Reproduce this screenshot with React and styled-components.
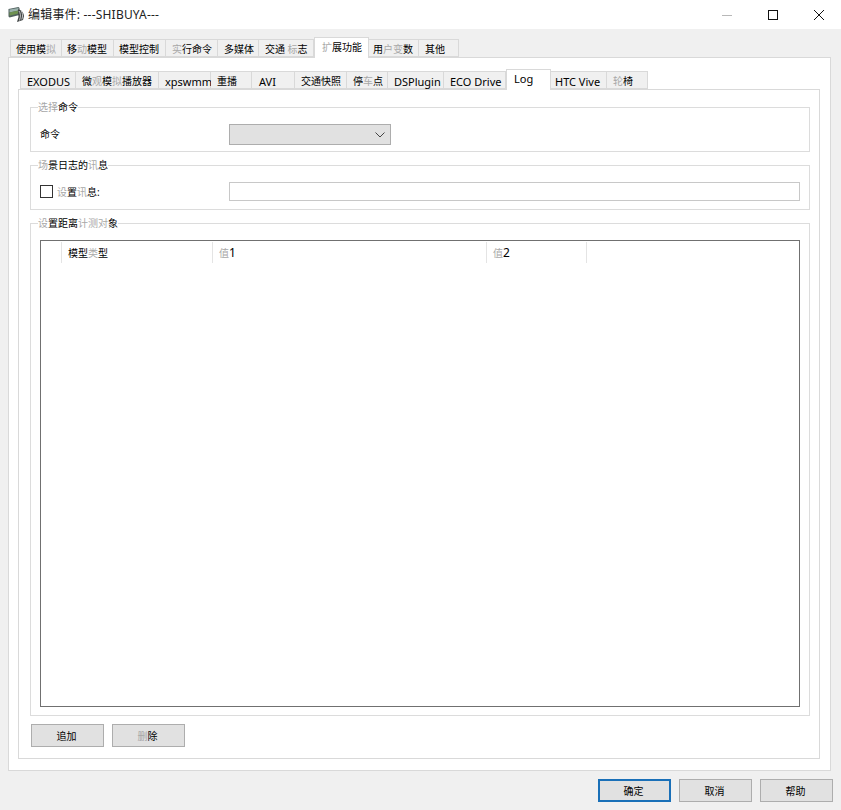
import React from "react";
import styled, { createGlobalStyle } from "styled-components";

const Global = createGlobalStyle`
  html, body {
    margin: 0;
    padding: 0;
    background: #f0f0f0;
  }
  * {
    box-sizing: border-box;
  }
`;

const Window = styled.div`
  width: 841px;
  height: 810px;
  overflow: hidden;
  display: flex;
  flex-direction: column;
  background: #f0f0f0;
  color: #000;
  font-family: "Noto Sans", "Noto Sans CJK SC", sans-serif;
  font-size: 10px;
`;

const TitleBar = styled.div`
  height: 29px;
  flex: none;
  display: flex;
  align-items: center;
  background: #fff;
  padding: 0 0 0 8px;
`;

const TitleText = styled.div`
  margin-left: 3px;
  font-size: 12px;
  letter-spacing: 0.2px;
  color: #222;
  flex: 1;
  line-height: 29px;
`;

const WinButton = styled.div`
  width: 46px;
  height: 29px;
  padding-left: 2px;
  display: flex;
  align-items: center;
  justify-content: center;
`;

const Main = styled.div`
  flex: 1;
  display: flex;
  flex-direction: column;
  padding: 10px 10px 8px 8px;
`;

const TabRow = styled.div`
  display: flex;
  align-items: flex-end;
  height: ${(p) => p.$h}px;
  padding-left: ${(p) => p.$left}px;
  position: relative;
  z-index: 1;
  flex: none;
`;

const Tab = styled.div`
  width: ${(p) => p.$w}px;
  height: ${(p) => (p.$active ? 21 : 18)}px;
  margin-bottom: ${(p) => (p.$active ? -1 : 0)}px;
  padding-left: ${(p) => p.$pad}px;
  background: ${(p) => (p.$active ? "#fff" : "#f0f0f0")};
  border: 1px solid #d9d9d9;
  border-left-width: ${(p) => (p.$first || p.$active ? 1 : 0)}px;
  border-bottom-width: ${(p) => (p.$active ? 0 : 1)}px;
  line-height: ${(p) => (p.$active ? 18 : 19)}px;
  font-size: ${(p) => (p.$latin ? 11 : 10)}px;
  white-space: nowrap;
  flex: none;
`;

const Faint = styled.span`
  color: #a8a8a8;
`;

const OuterPage = styled.div`
  flex: 1;
  display: flex;
  flex-direction: column;
  background: #fff;
  border: 1px solid #d9d9d9;
  padding: 13px 10px 11px 9px;
`;

const InnerPage = styled.div`
  flex: 1;
  display: flex;
  flex-direction: column;
  gap: 6px;
  border: 1px solid #d9d9d9;
  padding: 10px 9px 11px 11px;
  background: #fff;
`;

const Group = styled.fieldset`
  margin: 0;
  min-width: 0;
  border: 1px solid #dcdcdc;
  padding: 0;
  height: ${(p) => (p.$grow ? "auto" : "52px")};
  flex: ${(p) => (p.$grow ? "1" : "none")};
  display: flex;
  flex-direction: column;
`;

const Legend = styled.legend`
  margin-left: 7px;
  padding: 0;
  font-size: 10px;
  line-height: 14px;
  height: 14px;
`;

const CommandRow = styled.div`
  display: flex;
  align-items: center;
  height: 21px;
  margin: 10px 0 0 9px;
`;

const FieldLabel = styled.div`
  width: 189px;
  flex: none;
  line-height: 21px;
`;

const Select = styled.div`
  width: 162px;
  height: 21px;
  background: #e1e1e1;
  border: 1px solid #adadad;
  display: flex;
  align-items: center;
  justify-content: flex-end;
  padding-right: 4px;
`;

const MessageRow = styled.div`
  display: flex;
  align-items: center;
  height: 19px;
  margin: 10px 9px 0 9px;
`;

const Check = styled.div`
  width: 13px;
  height: 13px;
  border: 1px solid #333;
  background: #fff;
  flex: none;
  margin: 0 4px 0 0;
`;

const CheckLabel = styled.div`
  width: 172px;
  flex: none;
`;

const TextInput = styled.div`
  flex: 1;
  height: 19px;
  background: #fff;
  border: 1px solid #c8c8c8;
`;

const Table = styled.div`
  flex: 1;
  margin: 10px 9px 8px 9px;
  border: 1px solid #707070;
  padding-top: 1px;
`;

const TableHead = styled.div`
  display: flex;
  height: 21px;
`;

const HeadCell = styled.div`
  width: ${(p) => p.$w}px;
  flex: none;
  padding-left: 6px;
  border-right: 1px solid #e4e4e4;
  line-height: 22px;
  white-space: nowrap;
`;

const Num = styled.span`
  font-size: 12px;
`;

const ButtonRow = styled.div`
  display: flex;
  gap: 8px;
  flex: none;
  margin-top: 2px;
  margin-left: 1px;
`;

const Button = styled.button`
  width: 73px;
  height: 23px;
  padding: 0 2px 0 0;
  margin: 0;
  background: #e1e1e1;
  border: ${(p) => (p.$primary ? "2px solid #1a70b8" : "1px solid #adadad")};
  font-family: inherit;
  font-size: 10px;
  color: #000;
`;

const FooterRow = styled.div`
  display: flex;
  gap: 8px;
  flex: none;
  justify-content: flex-end;
  margin: 8px -2px 0 0;
`;

// picture card with a road curving across its lower right corner
const RoadIcon = () => (
  <svg width="17" height="17" viewBox="0 0 17 17">
    <path d="M0.5 3 L10.5 1 L11.5 2 L11.5 9 L1.5 11.5 L0.5 10.5 Z" fill="#50605e" />
    <path d="M1.5 3.6 L10.5 1.9 L10.5 4.4 L1.5 6.4 Z" fill="#9bb2ad" />
    <path d="M1.5 6.4 L10.5 4.4 L10.5 7.6 L1.5 9.8 Z" fill="#6e9150" />
    <path d="M10 3.5 C13 3.5 15.5 6 16 10 L15 14 L9 16 L10.5 11 Z" fill="#3f4343" />
    <path d="M11 5 C12.5 7 13 10 11.5 14.5 M13 4.8 C14.8 7 15 10 13.8 13.5" stroke="#d6d6d6" strokeWidth="0.9" fill="none" />
  </svg>
);

const outerTabs = [
  { w: 52, pad: 5, first: true, text: <>使用模<Faint>拟</Faint></> },
  { w: 52, pad: 5, text: <>移<Faint>动</Faint>模型</> },
  { w: 52, pad: 5, text: "模型控制" },
  { w: 52, pad: 6, text: <><Faint>实</Faint>行命令</> },
  { w: 41, pad: 6, text: "多媒体" },
  { w: 55, pad: 6, text: <>交通 <Faint>标</Faint>志</> },
  { w: 55, pad: 7, active: true, text: <><Faint>扩</Faint>展功能</> },
  { w: 50, pad: 4, text: <>用<Faint>户</Faint><Faint>变</Faint>数</> },
  { w: 40, pad: 6, text: "其他" },
];

const innerTabs = [
  { w: 56, pad: 6, first: true, latin: true, text: "EXODUS" },
  { w: 83, pad: 6, text: <>微<Faint>观</Faint>模<Faint>拟</Faint>播放器</> },
  { w: 52, pad: 6, latin: true, text: "xpswmm" },
  { w: 41, pad: 6, text: "重播" },
  { w: 43, pad: 7, latin: true, text: "AVI" },
  { w: 52, pad: 6, text: "交通快照" },
  { w: 41, pad: 6, text: <>停<Faint>车</Faint>点</> },
  { w: 56, pad: 6, latin: true, text: "DSPlugin" },
  { w: 62, pad: 6, latin: true, text: "ECO Drive" },
  { w: 45, pad: 7, active: true, latin: true, text: "Log" },
  { w: 56, pad: 4, latin: true, text: "HTC Vive" },
  { w: 41, pad: 6, text: <><Faint>轮</Faint>椅</> },
];

const columns = [
  { w: 21, text: "" },
  { w: 151, text: <>模型<Faint>类</Faint>型</> },
  { w: 274, text: <><Faint>值</Faint><Num>1</Num></> },
  { w: 100, text: <><Faint>值</Faint><Num>2</Num></> },
];

const renderTabs = (tabs) =>
  tabs.map((t, i) => (
    <Tab key={i} $w={t.w} $pad={t.pad} $first={t.first} $active={t.active} $latin={t.latin}>
      {t.text}
    </Tab>
  ));

export default function App() {
  return (
    <Window>
      <Global />
      <TitleBar>
        <RoadIcon />
        <TitleText>编辑事件: ---SHIBUYA---</TitleText>
        <WinButton>
          <svg width="10" height="10" viewBox="0 0 10 10">
            <path d="M0 5.5 H10" stroke="#b8b8b8" strokeWidth="1" />
          </svg>
        </WinButton>
        <WinButton>
          <svg width="10" height="10" viewBox="0 0 10 10">
            <rect x="0.5" y="0.5" width="9" height="9" fill="none" stroke="#111" strokeWidth="1" />
          </svg>
        </WinButton>
        <WinButton>
          <svg width="10" height="10" viewBox="0 0 10 10">
            <path d="M0 0 L10 10 M10 0 L0 10" stroke="#111" strokeWidth="1" />
          </svg>
        </WinButton>
      </TitleBar>
      <Main>
        <TabRow $h={18} $left={2}>
          {renderTabs(outerTabs)}
        </TabRow>
        <OuterPage>
          <TabRow $h={18} $left={2}>
            {renderTabs(innerTabs)}
          </TabRow>
          <InnerPage>
            <Group>
              <Legend><Faint>选择</Faint>命令</Legend>
              <CommandRow>
                <FieldLabel>命令</FieldLabel>
                <Select>
                  <svg width="12" height="8" viewBox="0 0 12 8">
                    <path d="M1.5 1.5 L6 6 L10.5 1.5" fill="none" stroke="#444" strokeWidth="1" />
                  </svg>
                </Select>
              </CommandRow>
            </Group>
            <Group>
              <Legend><Faint>场</Faint>景日志的<Faint>讯</Faint>息</Legend>
              <MessageRow>
                <Check />
                <CheckLabel><Faint>设</Faint>置<Faint>讯</Faint>息:</CheckLabel>
                <TextInput />
              </MessageRow>
            </Group>
            <Group $grow>
              <Legend><Faint>设</Faint>置距离<Faint>计测对</Faint>象</Legend>
              <Table>
                <TableHead>
                  {columns.map((c, i) => (
                    <HeadCell key={i} $w={c.w}>{c.text}</HeadCell>
                  ))}
                </TableHead>
              </Table>
            </Group>
            <ButtonRow>
              <Button>追加</Button>
              <Button><Faint>删</Faint>除</Button>
            </ButtonRow>
          </InnerPage>
        </OuterPage>
        <FooterRow>
          <Button $primary>确定</Button>
          <Button>取消</Button>
          <Button>帮助</Button>
        </FooterRow>
      </Main>
    </Window>
  );
}
